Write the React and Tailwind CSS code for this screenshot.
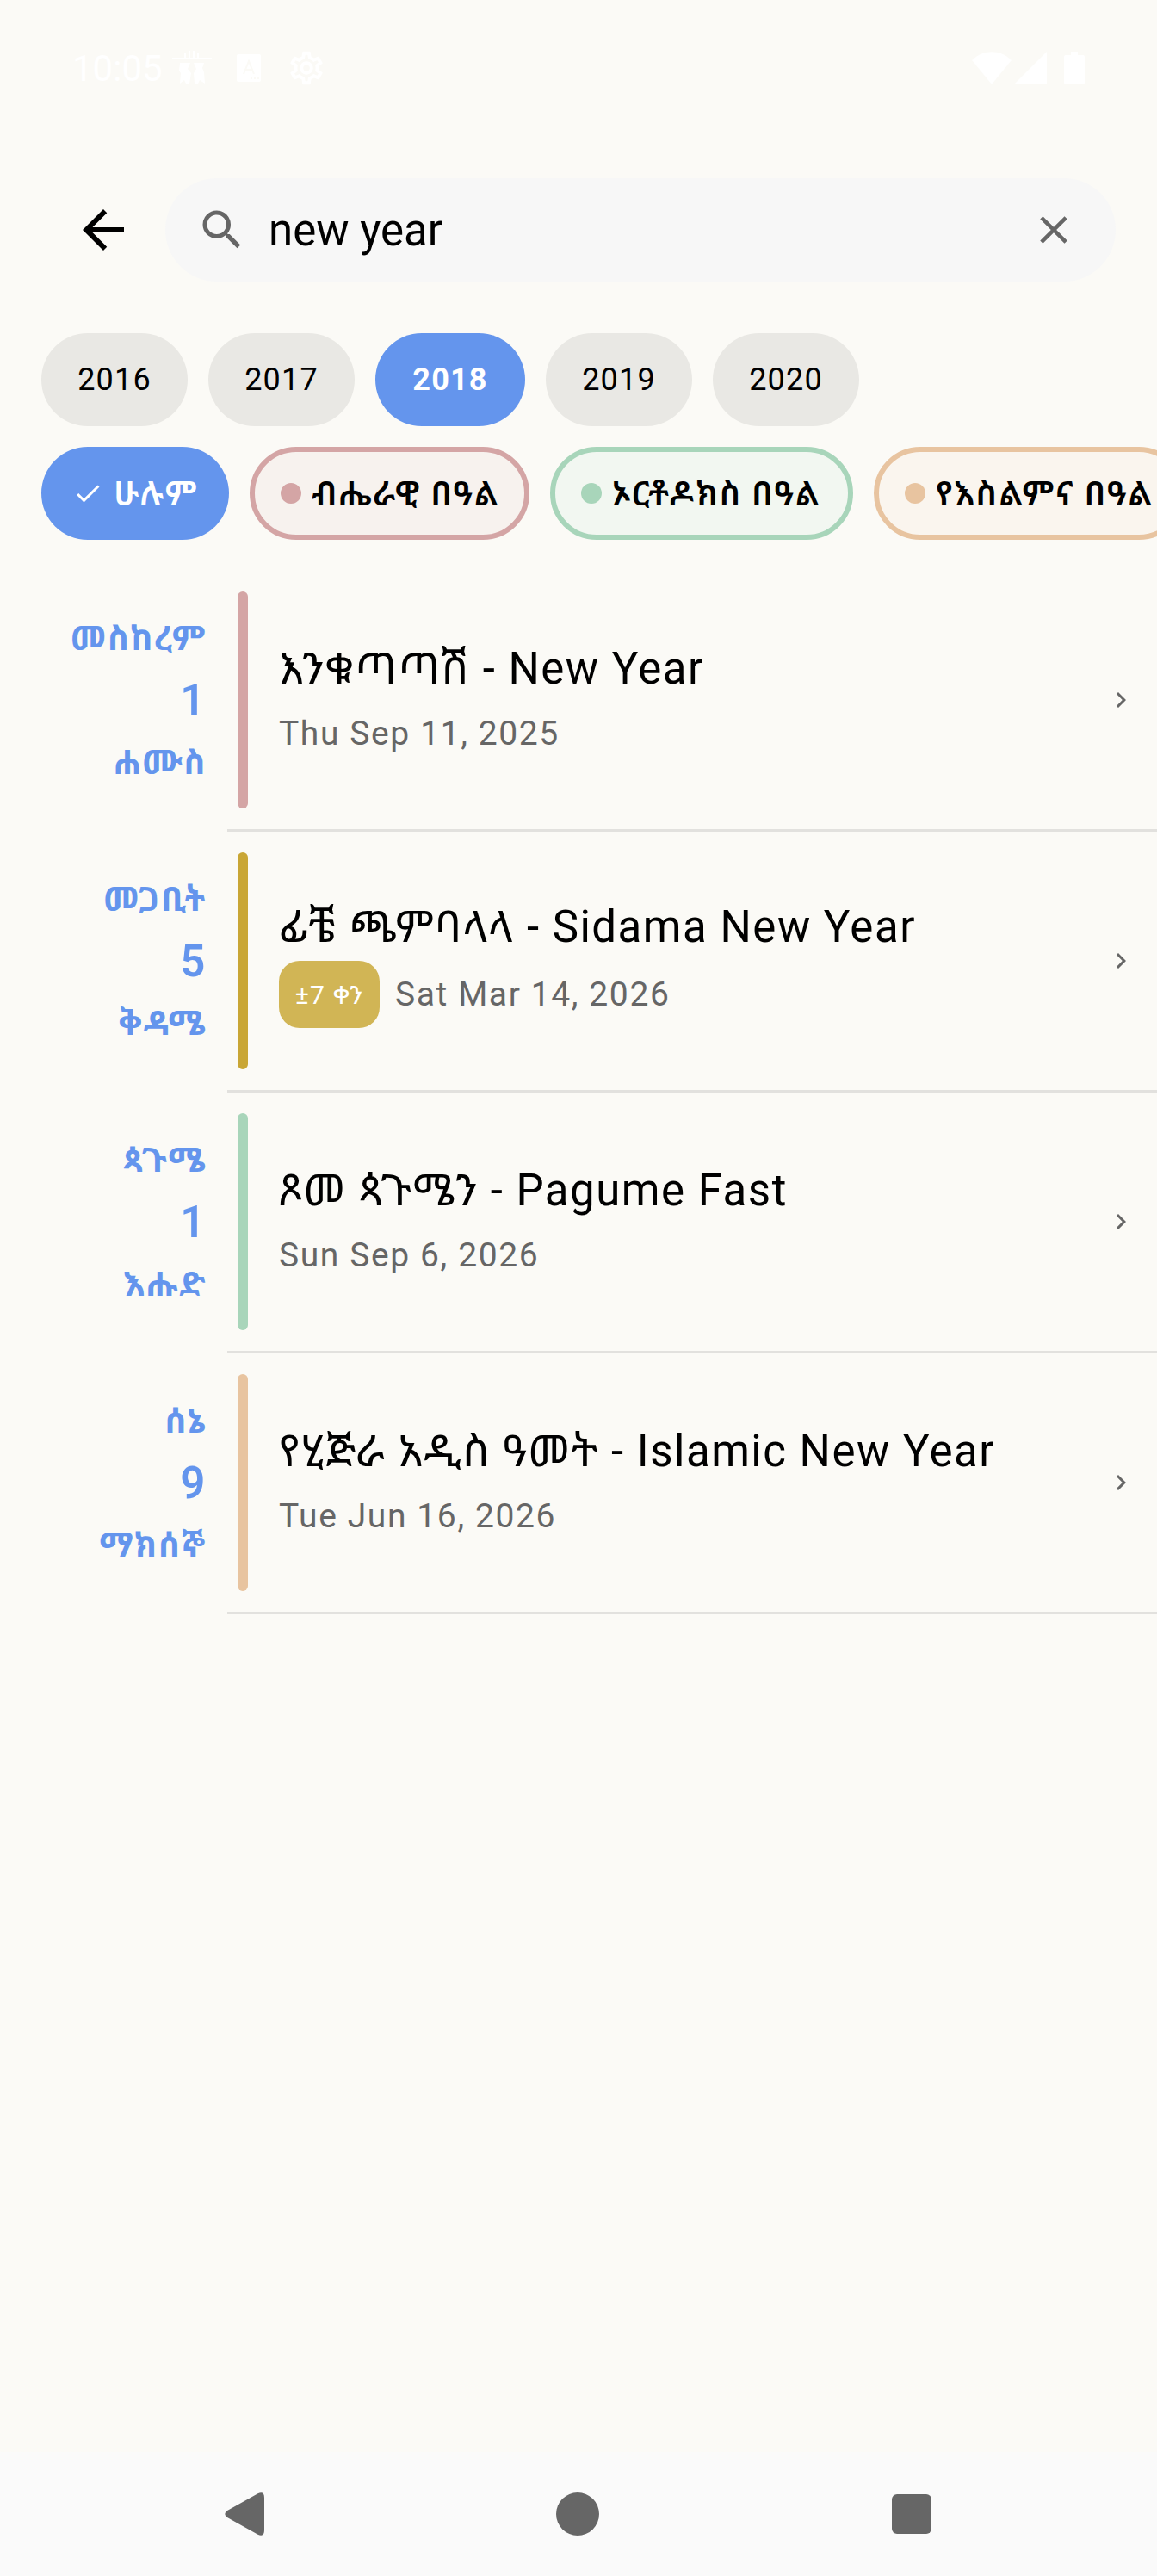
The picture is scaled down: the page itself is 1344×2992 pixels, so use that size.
import React from 'react';
import { MdArrowBack, MdSearch, MdClose, MdCheck, MdChevronRight, MdOutlineSettings } from 'react-icons/md';

const years = ['2016', '2017', '2018', '2019', '2020'];

const filters = [
    { label: 'ብሔራዊ በዓል', chip: 'border-[#d4a5a5] bg-[#f7f2ee]', dot: 'bg-[#d4a5a5]', width: 'w-[325px]' },
    { label: 'ኦርቶዶክስ በዓል', chip: 'border-[#a8d5ba] bg-[#f2f7f1]', dot: 'bg-[#a8d5ba]', width: 'w-[352px]' },
    { label: 'የእስልምና በዓል', chip: 'border-[#e8c4a0] bg-[#faf5ee]', dot: 'bg-[#e8c4a0]', width: 'w-[362px]' },
];

const holidays = [
    { month: 'መስከረም', day: '1', weekday: 'ሐሙስ', title: 'እንቁጣጣሽ', english: 'New Year', date: 'Thu Sep 11, 2025', bar: 'bg-[#d4a5a5]' },
    { month: 'መጋቢት', day: '5', weekday: 'ቅዳሜ', title: 'ፊቼ ጫምባላላ', english: 'Sidama New Year', date: 'Sat Mar 14, 2026', bar: 'bg-[#c9a635]', badge: '±7 ቀን' },
    { month: 'ጳጉሜ', day: '1', weekday: 'እሑድ', title: 'ጾመ ጳጉሜን', english: 'Pagume Fast', date: 'Sun Sep 6, 2026', bar: 'bg-[#a8d5ba]' },
    { month: 'ሰኔ', day: '9', weekday: 'ማክሰኞ', title: 'የሂጅራ አዲስ ዓመት', english: 'Islamic New Year', date: 'Tue Jun 16, 2026', bar: 'bg-[#e8c4a0]' },
];

const StatusBar = () => (
    <div className="flex h-[156px] items-center justify-between px-[84px] pt-[2px] text-white">
        <div className="flex items-center">
            <span className="w-[104px] text-[42px]">10:05</span>
            <svg width="46" height="40" viewBox="0 0 46 40" className="ml-[12px]" fill="currentColor">
                <path d="M14 2h2v6h-2zM19 0h2v8h-2zM24 0h2v8h-2zM29 2h2v6h-2zM0 8h46v2H0z" />
                <path d="M9 14h12l-3 7 4 5-2 12h-4l-2-4-5 4 1-12-2-3zM25 14h12l-2 6 2 5 1 13-6-4-2 4h-4l-1-12 3-5z" />
            </svg>
            <svg width="28" height="32" viewBox="0 0 28 32" className="ml-[29px]">
                <rect width="28" height="32" rx="2" fill="currentColor" />
                <path d="M8 23l6-15 6 15M10 18h8" fill="none" stroke="#fbfaf6" strokeWidth="2" />
                <path d="M16 28h2M20 28h2M24 28h2" stroke="#fbfaf6" strokeWidth="2" />
            </svg>
            <MdOutlineSettings size={46} className="ml-[30px]" />
        </div>
        <div className="flex items-center">
            <svg width="46" height="38" viewBox="0 0 46 38" fill="currentColor">
                <path d="M23 38L0 10C13-3 33-3 46 10z" />
            </svg>
            <svg width="38" height="38" viewBox="0 0 38 38" className="ml-[3px]" fill="currentColor">
                <path d="M38 0v38H0z" />
            </svg>
            <svg width="24" height="38" viewBox="0 0 24 38" className="ml-[20px]" fill="currentColor">
                <path d="M8 0h8v4h6a2 2 0 0 1 2 2v30a2 2 0 0 1-2 2H2a2 2 0 0 1-2-2V6a2 2 0 0 1 2-2h6z" />
            </svg>
        </div>
    </div>
);

const HolidayRow = ({ item }) => (
    <div>
        <div className="flex h-[300px] items-center py-[24px] pr-[24px]">
            <div className="flex w-[240px] flex-col items-end pt-[2px] font-bold tracking-[1.5px] text-[#6495ed]">
                <span className="text-[39px] leading-[72px]">{item.month}</span>
                <span className="text-[51px] font-semibold leading-[72px]">{item.day}</span>
                <span className="text-[39px] leading-[72px]">{item.weekday}</span>
            </div>
            <div className={`ml-[36px] h-[252px] w-[12px] rounded-full ${item.bar}`} />
            <div className="ml-[36px] flex-1">
                <div className="h-[78px] whitespace-nowrap text-[51px] leading-[78px] tracking-[1.5px] text-black">
                    {item.title} - {item.english}
                </div>
                <div className={`flex items-center ${item.badge ? 'h-[78px]' : 'h-[72px]'}`}>
                    {item.badge && (
                        <span className="mr-[18px] flex h-[78px] w-[117px] items-center justify-center rounded-[24px] bg-[#d1b555] text-[30px] tracking-[1.2px] text-white">{item.badge}</span>
                    )}
                    <span className="text-[39px] leading-[72px] tracking-[1.6px] text-[#666]">{item.date}</span>
                </div>
            </div>
            <MdChevronRight size={36} className="text-[#666]" />
        </div>
        <div className="ml-[264px] h-[3px] bg-[#e2e1de]" />
    </div>
);

const NavBar = () => (
    <div className="flex h-[144px] items-center bg-[#fafafa] pl-[261px] text-[#666]">
        <svg width="46" height="50" viewBox="0 0 46 50" fill="currentColor">
            <path d="M38.500 1.300Q46-2 46 6V44Q46 52 38.500 48.700L3 29Q-2.500 25 3 21z" />
        </svg>
        <div className="ml-[339px] size-[50px] rounded-full bg-[#666]" />
        <div className="ml-[340px] size-[46px] rounded-[6px] bg-[#666]" />
    </div>
);

const App = () => (
    <div className="flex h-[2992px] w-[1344px] flex-col overflow-hidden bg-[#fbfaf6] font-['Roboto','Noto_Sans_Ethiopic','Noto_Sans',sans-serif]">
        <StatusBar />
        <div className="mt-[51px] flex items-center pl-[84px] pr-[48px]">
            <MdArrowBack size={72} className="text-black" />
            <div className="ml-[36px] flex h-[120px] flex-1 items-center rounded-full bg-[#f7f7f7] pl-[36px] pr-[45px]">
                <MdSearch size={60} className="text-[#666]" />
                <span className="ml-[24px] flex-1 pt-[2px] text-[51px] text-black">new year</span>
                <MdClose size={54} className="text-[#666]" />
            </div>
        </div>
        <div className="mt-[60px] flex gap-[24px] pl-[48px] text-[36px]">
            {years.map((year) => (
                <div
                    key={year}
                    className={`flex h-[108px] items-center justify-center rounded-full tracking-[1.2px] ${year === '2018' ? 'w-[174px] bg-[#6495ed] font-bold text-white' : 'w-[170px] bg-[#e9e8e4] text-black'}`}
                >
                    {year}
                </div>
            ))}
        </div>
        <div className="mt-[24px] flex gap-[24px] pl-[48px] text-[39px] font-semibold">
            <div className="flex h-[108px] w-[218px] shrink-0 items-center rounded-full bg-[#6495ed] pl-[36px] text-white">
                <MdCheck size={36} />
                <span className="ml-[12px] pt-[3px] tracking-[1.5px]">ሁሉም</span>
            </div>
            {filters.map((f) => (
                <div key={f.label} className={`flex h-[108px] shrink-0 items-center rounded-full border-[6px] pl-[30px] text-black ${f.chip} ${f.width}`}>
                    <span className={`size-[24px] rounded-full ${f.dot}`} />
                    <span className="ml-[12px] whitespace-nowrap pt-[3px] tracking-[1.5px]">{f.label}</span>
                </div>
            ))}
        </div>
        <div className="mt-[36px] flex-1">
            {holidays.map((item) => (
                <HolidayRow key={item.title} item={item} />
            ))}
        </div>
        <NavBar />
    </div>
);

export default App;
